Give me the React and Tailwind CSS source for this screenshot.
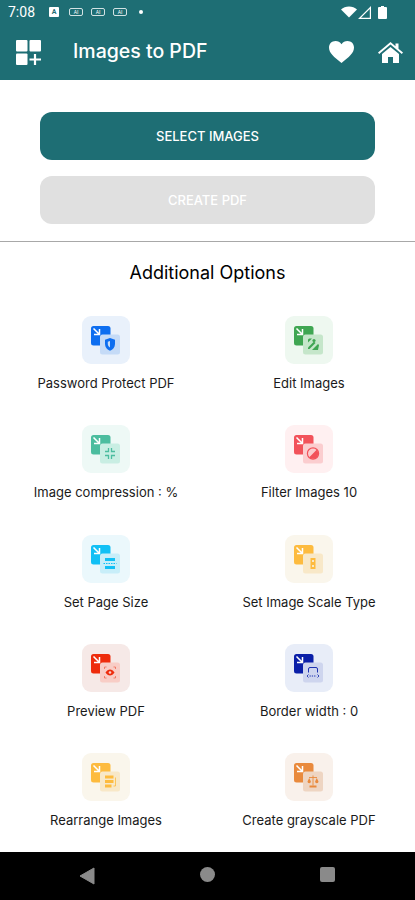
const options = [
  { label: "Password Protect PDF", tile: "#e9f1fb", big: "#0d6ef0", small: "#c5dbf7", fg: "#0d6ef0", glyph: "shield" },
  { label: "Edit Images", tile: "#eef8f0", big: "#3fa652", small: "#c5e6ca", fg: "#3fa652", glyph: "edit" },
  { label: "Image compression : %", tile: "#eef9f6", big: "#4cbd9f", small: "#c9eee3", fg: "#4cbd9f", glyph: "compress" },
  { label: "Filter Images 10", tile: "#fff0f1", big: "#f2525a", small: "#fbcdcf", fg: "#f2525a", glyph: "filter" },
  { label: "Set Page Size", tile: "#ebf8fc", big: "#12c0f5", small: "#c8eef9", fg: "#12c0f5", glyph: "page" },
  { label: "Set Image Scale Type", tile: "#faf6ec", big: "#fdbb3f", small: "#f8e8c8", fg: "#fdbb3f", glyph: "scale" },
  { label: "Preview PDF", tile: "#f6e9e7", big: "#ee2c0c", small: "#f8cdc6", fg: "#ee2c0c", glyph: "eye" },
  { label: "Border width : 0", tile: "#e8edf8", big: "#0a1fa8", small: "#ced5ee", fg: "#0a1fa8", glyph: "border" },
  { label: "Rearrange Images", tile: "#faf6ec", big: "#fdbb3f", small: "#f8e8c8", fg: "#fdbb3f", glyph: "rearrange" },
  { label: "Create grayscale PDF", tile: "#f9f1eb", big: "#e98a3d", small: "#eed5c2", fg: "#e98a3d", glyph: "balance" },
];

function Glyph({ name, fg, small }) {
  // drawn in tile coordinates, small square is centred on 28,28
  if (name === "shield")
    return (
      <>
        <path d="M28 21.5l5 1.8v4.2c0 3.2-2.2 5.6-5 6.8-2.8-1.2-5-3.6-5-6.8v-4.2z" fill={fg} />
        <path d="M28 24.5v6.5c-1.4-.9-2.2-2.1-2.2-3.6v-2.1z" fill={small} />
      </>
    );
  if (name === "edit")
    return (
      <>
        <circle cx="29" cy="24" r="1.6" fill={fg} />
        <path d="M23 23.5a1.5 1.5 0 0 1 1.5-1.5H27l-4 4z" fill={fg} />
        <path d="M23 31l6-6 1.5 1.5-6 6H23z" fill={fg} />
        <path d="M27 33.5l6-6 1 1-1 5z" fill={fg} />
      </>
    );
  if (name === "compress")
    return (
      <path d="M26.5 22.5v3.5H23M29.500 22.500v3.500H33M26.500 33.500v-3.500H23M29.500 33.500v-3.500H33" fill="none" stroke={fg} strokeWidth="1.3" />
    );
  if (name === "filter")
    return (
      <>
        <circle cx="28" cy="28" r="5.6" fill="none" stroke={fg} strokeWidth="1.2" />
        <path d="M24.300 31.700a5.200 5.200 0 0 0 7.400-7.400z" fill={fg} />
      </>
    );
  if (name === "page")
    return (
      <>
        <rect x="23" y="22.500" width="10" height="3" fill={fg} />
        <rect x="23" y="30.500" width="10" height="3" fill={fg} />
        <path d="M21.500 28h13" stroke={fg} strokeWidth="1" strokeDasharray="1.5 1" />
      </>
    );
  if (name === "scale")
    return (
      <>
        <rect x="25.500" y="22.500" width="5" height="11" fill={fg} />
        <rect x="27" y="24.500" width="2" height="2" fill={small} />
        <rect x="27" y="29.500" width="2" height="2" fill={small} />
      </>
    );
  if (name === "eye")
    return (
      <>
        <path d="M23.500 28c1.200-2 2.800-3 4.500-3s3.300 1 4.500 3c-1.200 2-2.800 3-4.500 3s-3.300-1-4.500-3z" fill={fg} />
        <circle cx="28" cy="28" r="1.300" fill={small} />
        <path d="M22.500 24.500v-2h2M31.500 22.500h2v2M22.500 31.500v2h2M31.500 33.500h2v-2" fill="none" stroke={fg} strokeOpacity="0.6" strokeWidth="0.8" />
      </>
    );
  if (name === "border")
    return (
      <>
        <path d="M23.500 28v-3.500a1.500 1.500 0 0 1 1.500-1.500h6a1.500 1.500 0 0 1 1.500 1.500V28" fill="none" stroke={fg} strokeWidth="0.9" />
        <path d="M23.500 30l-1.500 1.500 1.500 1.500M32.500 30l1.500 1.500-1.500 1.500" fill="none" stroke={fg} strokeWidth="0.8" />
        <path d="M24.500 31.500h7" stroke={fg} strokeWidth="0.9" strokeDasharray="1.3 1" />
      </>
    );
  if (name === "rearrange")
    return (
      <>
        <rect x="23" y="22" width="8.500" height="3" fill={fg} />
        <rect x="23" y="26.500" width="8.500" height="3" fill={fg} />
        <rect x="23" y="31" width="6.500" height="3" fill={fg} />
        <path d="M33.500 24v8.500h-2" fill="none" stroke={fg} strokeWidth="0.8" />
      </>
    );
  return (
    <>
      <path d="M28 22v10M24 24h8" stroke={fg} strokeWidth="0.9" />
      <path d="M22.500 28l1.700-3.500 1.700 3.500a1.700 1.700 0 0 1-3.400 0zM30.100 28l1.700-3.500 1.700 3.500a1.700 1.700 0 0 1-3.400 0z" fill={fg} />
      <rect x="24.500" y="32" width="7" height="2" fill={fg} />
    </>
  );
}

function OptionIcon({ tile, big, small, fg, glyph }) {
  return (
    <svg width="48" height="48" viewBox="0 0 48 48">
      <rect width="48" height="48" rx="9" fill={tile} />
      <rect x="9" y="10" width="19.500" height="19.500" rx="2.500" fill={big} />
      <path d="M11.500 12.500l5.500 5.500M17.500 13v5.500H12" fill="none" stroke="#fff" strokeWidth="1.500" />
      <rect x="18" y="18.500" width="20" height="20" rx="2.500" fill={small} />
      <g transform="translate(0,0.500)">
        <Glyph name={glyph} fg={fg} small={small} />
      </g>
    </svg>
  );
}

function StatusBar() {
  return (
    <div className="flex h-6 items-center pl-2 pr-[28px] text-white">
      <span className="w-[30px] text-[14px] leading-none font-['Roboto',sans-serif]">7:08</span>
      <span className="ml-[11px] flex h-[10px] w-[10px] items-center justify-center rounded-[1px] bg-white text-[7px] leading-none font-bold text-[#1e6e74] font-['Roboto',sans-serif]">A</span>
      <div className="ml-[10px] flex gap-[8px]">
        {[0, 1, 2].map((i) => (
          <span key={i} className="flex h-[8px] w-[14px] items-center justify-center rounded-[2px] border border-white/80 text-[5px] leading-none font-['Roboto',sans-serif]">AI</span>
        ))}
      </div>
      <span className="ml-[12px] h-1 w-1 rounded-full bg-white" />
      <div className="ml-auto flex items-center">
        <svg width="16" height="12" viewBox="0 0 16 12"><path d="M0 3.500C2 1.500 5 .5 8 .5s6 1 8 3L8 11.500z" fill="#fff" /></svg>
        <svg width="13" height="13" viewBox="0 0 13 13" className="ml-[1px]"><path d="M13 0v13H0zM11.800 3L3 11.800h8.800z" fill="#fff" fillRule="evenodd" /></svg>
        <svg width="9" height="13" viewBox="0 0 9 13" className="ml-[7px]"><path d="M3 0h3v1h2a1 1 0 0 1 1 1v10a1 1 0 0 1-1 1H1a1 1 0 0 1-1-1V2a1 1 0 0 1 1-1h2z" fill="#fff" /></svg>
      </div>
    </div>
  );
}

function Header() {
  return (
    <div className="shrink-0 bg-[#1e6e74]">
      <StatusBar />
      <div className="flex h-14 items-center pl-[16px] pr-[12px] text-white">
        <svg width="25" height="25" viewBox="0 0 25 25">
          <rect width="11.500" height="11.500" rx="1" fill="#fff" />
          <rect x="13.500" width="11.500" height="11.500" rx="1" fill="#fff" />
          <rect y="13.500" width="11.500" height="11.500" rx="1" fill="#fff" />
          <path d="M19 14v11M13.500 19.500H25" stroke="#fff" strokeWidth="2.200" />
        </svg>
        <span className="ml-[32px] text-[19.5px] font-medium font-['Inter',sans-serif]">Images to PDF</span>
        <svg width="25" height="22" viewBox="0 0 25 22" className="ml-auto">
          <path d="M12.500 22C5 16 0 12 0 6.500 0 2.800 2.800 0 6.500 0c2.400 0 4.600 1.200 6 3.200C13.900 1.200 16.100 0 18.500 0 22.200 0 25 2.800 25 6.500 25 12 20 16 12.500 22z" fill="#fff" />
        </svg>
        <svg width="25" height="21" viewBox="0 0 25 21" className="ml-[24px]">
          <path d="M12.500 0l5 4.200V1.500h3v5.300L25 10.500l-1.200 1.400-11.300-9.400L1.200 11.900 0 10.500z" fill="#fff" />
          <path d="M12.500 5L21 12v9h-6v-6h-5v6H4v-9z" fill="#fff" />
        </svg>
      </div>
    </div>
  );
}

export default function App() {
  return (
    <div className="flex h-[900px] w-[415px] flex-col overflow-hidden bg-white font-['Inter',sans-serif]">
      <Header />
      <div className="flex shrink-0 flex-col gap-4 px-10 pt-8 pb-[17px]">
        <button className="h-12 rounded-xl bg-[#1e6e74] pt-px text-[13px] font-medium text-white">SELECT IMAGES</button>
        <button className="h-12 rounded-xl bg-[#e0e0e0] pt-px text-[13px] font-medium text-white">CREATE PDF</button>
      </div>
      <div className="h-px shrink-0 bg-[#a8a8a8]" />
      <h2 className="shrink-0 pt-[19px] text-center text-[18px] leading-[24px] font-normal text-black">Additional Options</h2>
      <div className="grid min-h-0 flex-1 auto-rows-[109.25px] grid-cols-2 overflow-hidden px-[4.5px] pt-[31px]">
        {options.map((o) => (
          <div key={o.label} className="flex flex-col items-center gap-[9px]">
            <OptionIcon {...o} />
            <span className="text-[13px] leading-5 text-[#1a1a1a]">{o.label}</span>
          </div>
        ))}
      </div>
      <div className="flex h-12 shrink-0 items-center bg-black">
        <div className="grid w-full grid-cols-3 px-[27px]">
          <div className="flex justify-center">
            <svg width="16" height="18" viewBox="0 0 16 18"><path d="M15 1v16L1 9z" fill="#8a8a8a" stroke="#8a8a8a" strokeLinejoin="round" /></svg>
          </div>
          <div className="flex justify-center">
            <div className="h-[15px] w-[15px] rounded-full bg-[#8a8a8a]" />
          </div>
          <div className="flex justify-center">
            <div className="h-[15px] w-[15px] rounded-[2px] bg-[#8a8a8a]" />
          </div>
        </div>
      </div>
    </div>
  );
}
